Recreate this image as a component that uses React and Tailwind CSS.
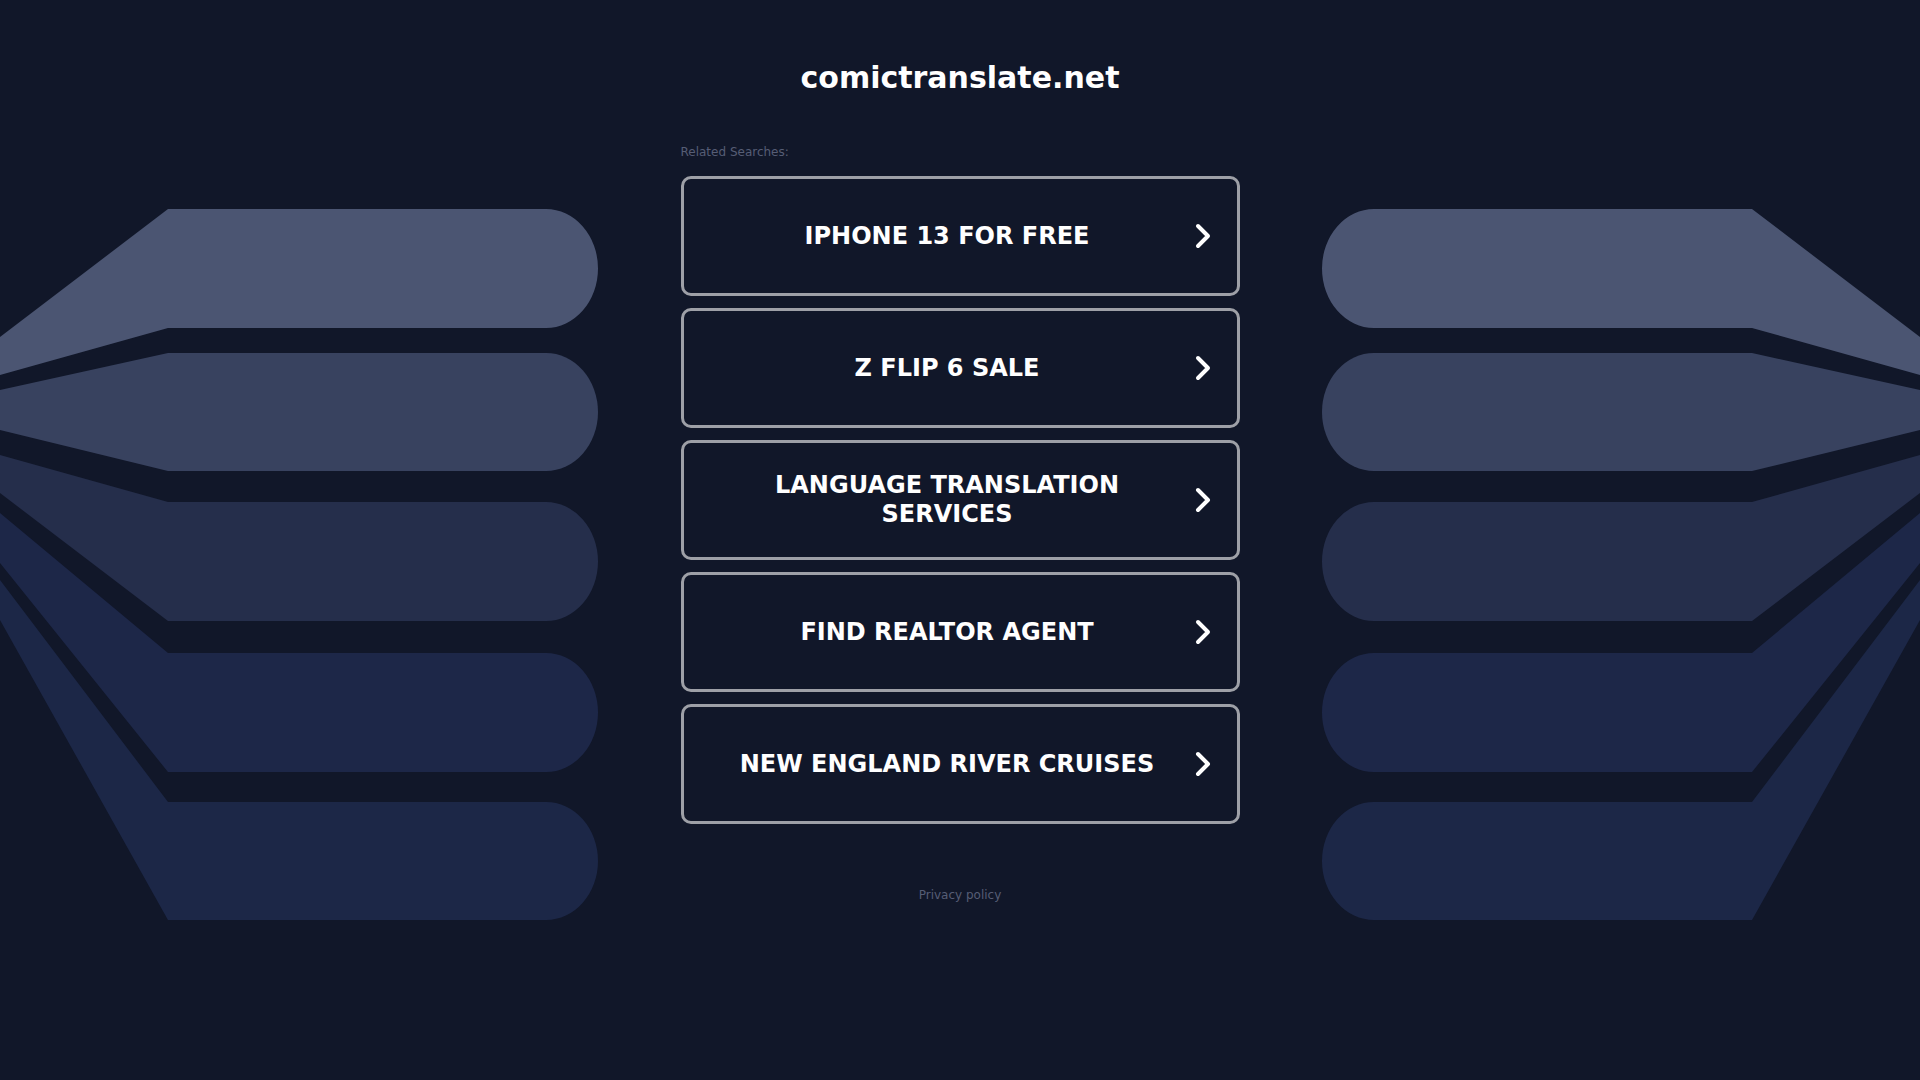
const searches = [
  "IPHONE 13 FOR FREE",
  "Z FLIP 6 SALE",
  "LANGUAGE TRANSLATION SERVICES",
  "FIND REALTOR AGENT",
  "NEW ENGLAND RIVER CRUISES",
];

// top, bottom of the pill, and where its tail meets the page edge
const bands = [
  { t: 209, b: 328, lt: 337, lb: 375, fill: "#4b5572" },
  { t: 353, b: 471, lt: 390, lb: 430, fill: "#38425f" },
  { t: 502, b: 621, lt: 455, lb: 493, fill: "#252e4b" },
  { t: 653, b: 772, lt: 513, lb: 563, fill: "#1d2748" },
  { t: 802, b: 920, lt: 580, lb: 620, fill: "#1c2747" },
];

const Fan = ({ flip }) => (
  <svg
    width="598"
    height="711"
    viewBox="0 209 598 711"
    className={flip ? "flex-none mt-[209px] -scale-x-100" : "flex-none mt-[209px]"}
  >
    {bands.map((s, i) => (
      <path
        key={i}
        fill={s.fill}
        d={`M0 ${s.lt} L168 ${s.t} L546 ${s.t} A52 ${(s.b - s.t) / 2} 0 0 1 546 ${s.b} L168 ${s.b} L0 ${s.lb} Z`}
      />
    ))}
  </svg>
);

const Chevron = () => (
  <svg width="16" height="26" viewBox="0 0 16 26" className="flex-none">
    <path d="M3 3 L13 13 L3 23" fill="none" stroke="#ffffff" strokeWidth="4" strokeLinecap="round" strokeLinejoin="round" />
  </svg>
);

const App = () => {
  return (
    <div className="min-h-screen w-full bg-[#111729] flex justify-between font-['DejaVu_Sans',sans-serif]">
      <Fan />
      <div className="w-[559px] flex-none flex flex-col items-stretch">
        <h1 className="mt-[60px] text-center text-[30px] leading-9 font-bold text-white">comictranslate.net</h1>
        <div className="mt-[48px] text-[12px] leading-4 text-[#565d75]">Related Searches:</div>
        <div className="mt-4 flex flex-col gap-3">
          {searches.map((s) => (
            <a
              key={s}
              href="#"
              className="h-[120px] flex items-center gap-6 pl-10 pr-[26px] border-[3px] border-[#9ea0a7] rounded-[10px] text-white"
            >
              <span className="flex-1 text-center text-[24px] leading-[1.2] font-bold uppercase">{s}</span>
              <Chevron />
            </a>
          ))}
        </div>
        <div className="mt-[63px] text-center text-[12px] leading-4 text-[#565d75]">Privacy policy</div>
      </div>
      <Fan flip />
    </div>
  );
};

export default App;
